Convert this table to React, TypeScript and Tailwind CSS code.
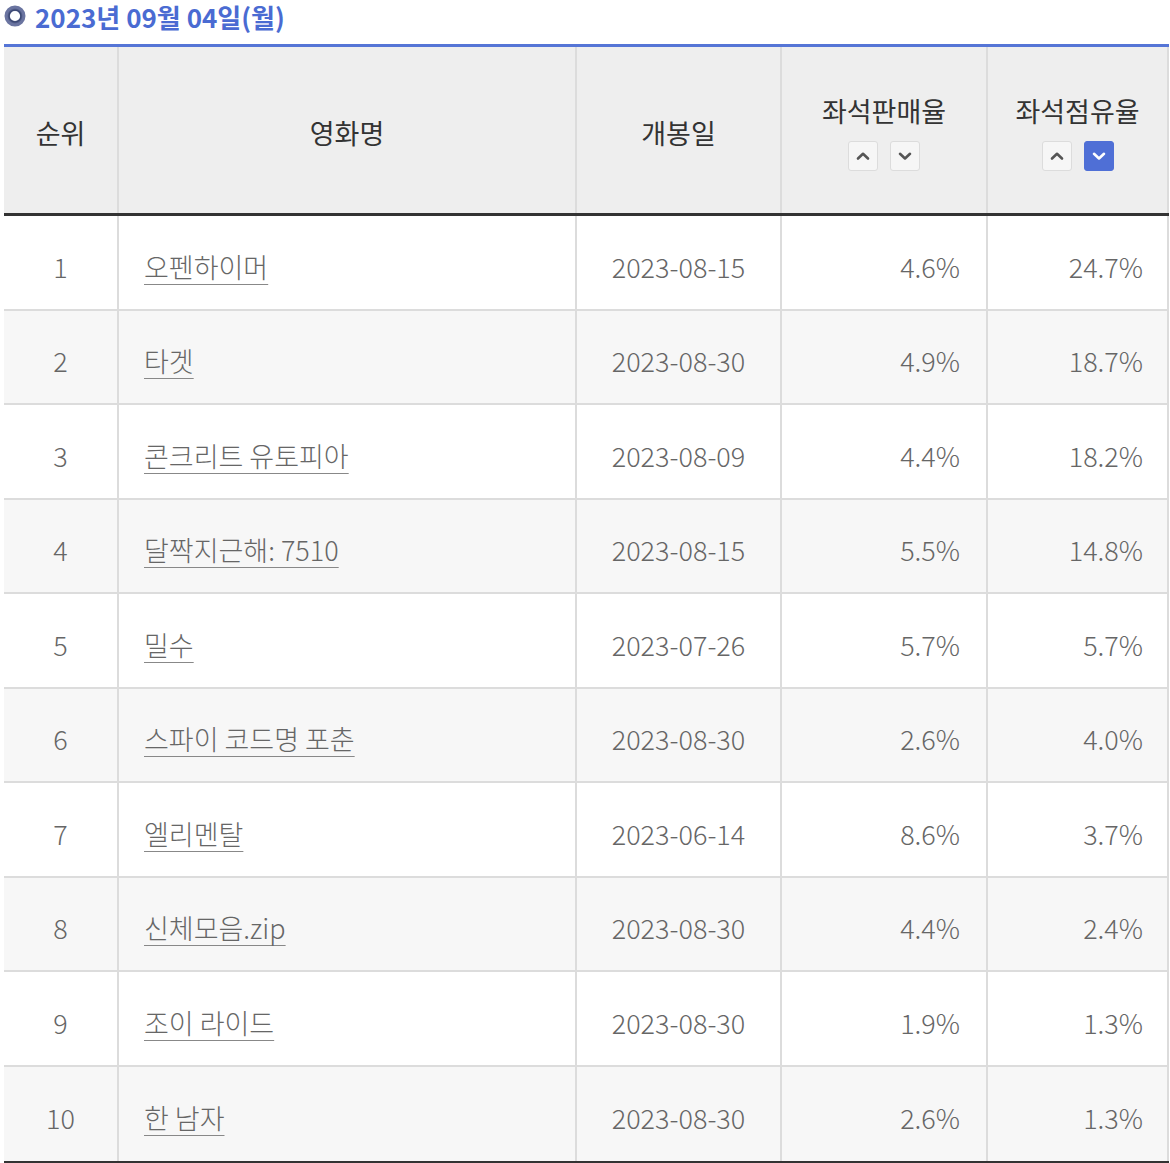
import { ReactNode } from 'react';

type Row = {
    rank: number;
    title: string;
    openDate: string;
    salesRate: string;
    shareRate: string;
};

const rows: Row[] = [
    { rank: 1, title: '오펜하이머', openDate: '2023-08-15', salesRate: '4.6%', shareRate: '24.7%' },
    { rank: 2, title: '타겟', openDate: '2023-08-30', salesRate: '4.9%', shareRate: '18.7%' },
    { rank: 3, title: '콘크리트 유토피아', openDate: '2023-08-09', salesRate: '4.4%', shareRate: '18.2%' },
    { rank: 4, title: '달짝지근해: 7510', openDate: '2023-08-15', salesRate: '5.5%', shareRate: '14.8%' },
    { rank: 5, title: '밀수', openDate: '2023-07-26', salesRate: '5.7%', shareRate: '5.7%' },
    { rank: 6, title: '스파이 코드명 포춘', openDate: '2023-08-30', salesRate: '2.6%', shareRate: '4.0%' },
    { rank: 7, title: '엘리멘탈', openDate: '2023-06-14', salesRate: '8.6%', shareRate: '3.7%' },
    { rank: 8, title: '신체모음.zip', openDate: '2023-08-30', salesRate: '4.4%', shareRate: '2.4%' },
    { rank: 9, title: '조이 라이드', openDate: '2023-08-30', salesRate: '1.9%', shareRate: '1.3%' },
    { rank: 10, title: '한 남자', openDate: '2023-08-30', salesRate: '2.6%', shareRate: '1.3%' },
];

const font = 'font-["Noto_Sans_CJK_KR","Noto_Sans",sans-serif]';

function SortButton({ dir, active }: { dir: 'up' | 'down'; active?: boolean }) {
    return (
        <button
            className={`w-[30px] h-[30px] flex items-center justify-center rounded-[3px] border ${active ? 'bg-[#4f6fd6] border-[#4f6fd6]' : 'bg-[#f6f6f6] border-[#dcdcdc]'}`}
        >
            <svg width="16" height="10" viewBox="0 0 16 10" fill="none">
                <path
                    d={dir === 'up' ? 'M3 7.5 L8 2.8 L13 7.5' : 'M3 2.8 L8 7.5 L13 2.8'}
                    stroke={active ? '#ffffff' : '#555555'}
                    strokeWidth="2.6"
                    strokeLinecap="round"
                    strokeLinejoin="round"
                />
            </svg>
        </button>
    );
}

function HeadCell({ width, children }: { width: string; children: ReactNode }) {
    return (
        <div className={`${width} h-full flex flex-col items-center justify-center border-r-2 border-[#dcdcdc]`}>
            {children}
        </div>
    );
}

export default function App() {
    return (
        <div className={`w-[1170px] bg-white ${font} text-[27px]`}>
            <div className="h-[44px] flex items-start gap-[9px] pl-[4px] pt-[1px]">
                <svg width="22" height="22" viewBox="0 0 22 22" className="mt-[4px]">
                    <defs>
                        <radialGradient id="ring" cx="50%" cy="50%" r="50%">
                            <stop offset="50%" stopColor="#7a83ab" />
                            <stop offset="75%" stopColor="#36436f" />
                            <stop offset="100%" stopColor="#6a74a0" />
                        </radialGradient>
                    </defs>
                    <circle cx="11" cy="11" r="7.8" fill="none" stroke="url(#ring)" strokeWidth="5.4" />
                </svg>
                <h2 className="text-[26px] font-bold leading-[32px] text-[#4a6bd2]">2023년 09월 04일(월)</h2>
            </div>

            <div className="ml-[4px] w-[1165px]">
                <div className="flex h-[172px] bg-[#eeeeee] border-t-[3px] border-b-[3px] border-t-[#5575d6] border-b-[#333333] text-[#333333]">
                    <HeadCell width="w-[115px]">
                        <span className="leading-none mt-[4px]">순위</span>
                    </HeadCell>
                    <HeadCell width="w-[458px]">
                        <span className="leading-none mt-[4px]">영화명</span>
                    </HeadCell>
                    <HeadCell width="w-[205px]">
                        <span className="leading-none mt-[4px]">개봉일</span>
                    </HeadCell>
                    <HeadCell width="w-[206px]">
                        <span className="leading-none mt-[8px]">좌석판매율</span>
                        <div className="flex gap-[12px] mt-[17px]">
                            <SortButton dir="up" />
                            <SortButton dir="down" />
                        </div>
                    </HeadCell>
                    <HeadCell width="w-[181px]">
                        <span className="leading-none mt-[8px]">좌석점유율</span>
                        <div className="flex gap-[12px] mt-[17px]">
                            <SortButton dir="up" />
                            <SortButton dir="down" active />
                        </div>
                    </HeadCell>
                </div>

                <div className="border-b-[3px] border-[#333333] font-light text-[#666666]">
                    {rows.map((row, i) => (
                        <div
                            key={row.rank}
                            className={`flex h-[94.5px] ${i < rows.length - 1 ? 'border-b-2 border-[#dcdcdc]' : ''} ${i % 2 === 1 ? 'bg-[#f7f7f7]' : 'bg-white'}`}
                        >
                            <div className="w-[115px] flex items-center justify-center pt-[9px] border-r-2 border-[#dcdcdc]">{row.rank}</div>
                            <div className="w-[458px] flex items-center pl-[25px] pt-[9px] border-r-2 border-[#dcdcdc]">
                                <a className="underline underline-offset-[6px] decoration-1 decoration-[#888888] cursor-pointer">{row.title}</a>
                            </div>
                            <div className="w-[205px] flex items-center justify-center pt-[9px] border-r-2 border-[#dcdcdc]">{row.openDate}</div>
                            <div className="w-[206px] flex items-center justify-end pr-[26px] pt-[9px] border-r-2 border-[#dcdcdc]">{row.salesRate}</div>
                            <div className="w-[181px] flex items-center justify-end pr-[24px] pt-[9px] border-r-2 border-[#dcdcdc]">{row.shareRate}</div>
                        </div>
                    ))}
                </div>
            </div>
        </div>
    );
}
